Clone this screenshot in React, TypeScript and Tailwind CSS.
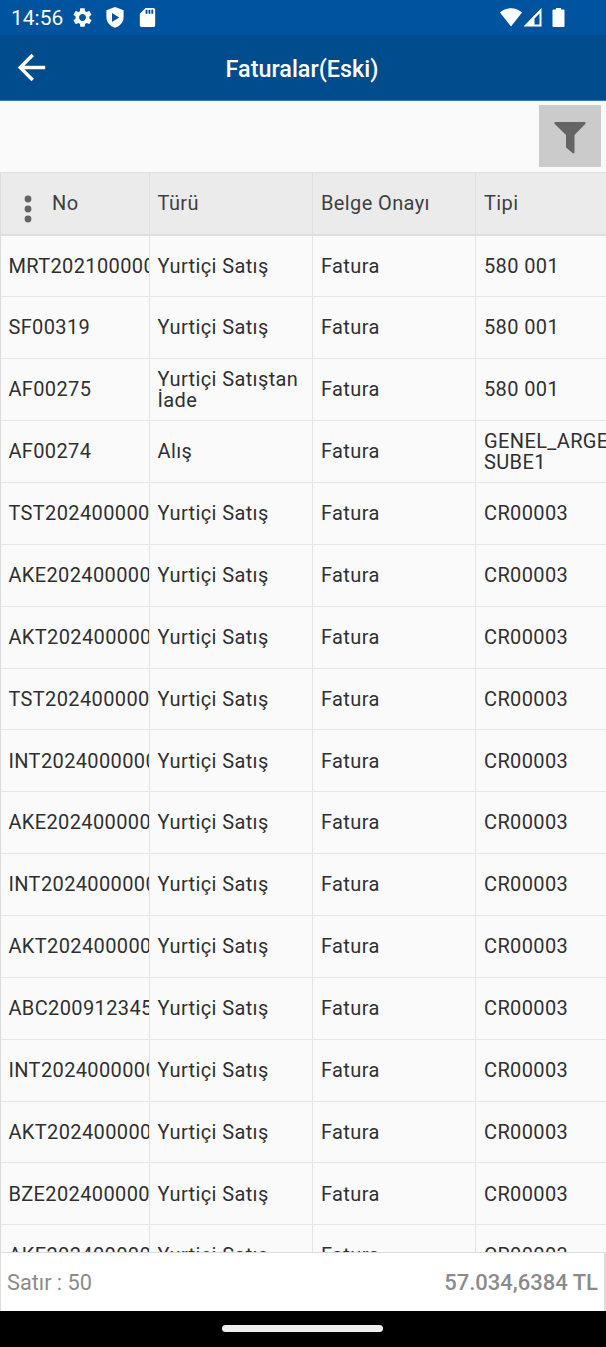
import { clsx } from "clsx";
import { MdArrowBack, MdSdCard, MdSettings } from "react-icons/md";

type Invoice = {
  no: string;
  kind: string;
  approval: string;
  branch: string;
};

const SALE = "Yurtiçi Satış";

const INVOICES: Invoice[] = [
  { no: "MRT2021000001", kind: SALE, approval: "Fatura", branch: "580 001" },
  { no: "SF00319", kind: SALE, approval: "Fatura", branch: "580 001" },
  { no: "AF00275", kind: "Yurtiçi Satıştan İade", approval: "Fatura", branch: "580 001" },
  { no: "AF00274", kind: "Alış", approval: "Fatura", branch: "GENEL_ARGE SUBE1" },
  { no: "TST202400000", kind: SALE, approval: "Fatura", branch: "CR00003" },
  { no: "AKE2024000001", kind: SALE, approval: "Fatura", branch: "CR00003" },
  { no: "AKT2024000001", kind: SALE, approval: "Fatura", branch: "CR00003" },
  { no: "TST202400000", kind: SALE, approval: "Fatura", branch: "CR00003" },
  { no: "INT2024000000", kind: SALE, approval: "Fatura", branch: "CR00003" },
  { no: "AKE2024000001", kind: SALE, approval: "Fatura", branch: "CR00003" },
  { no: "INT2024000000", kind: SALE, approval: "Fatura", branch: "CR00003" },
  { no: "AKT2024000001", kind: SALE, approval: "Fatura", branch: "CR00003" },
  { no: "ABC2009123456", kind: SALE, approval: "Fatura", branch: "CR00003" },
  { no: "INT2024000000", kind: SALE, approval: "Fatura", branch: "CR00003" },
  { no: "AKT2024000001", kind: SALE, approval: "Fatura", branch: "CR00003" },
  { no: "BZE202400000", kind: SALE, approval: "Fatura", branch: "CR00003" },
  { no: "AKE2024000001", kind: SALE, approval: "Fatura", branch: "CR00003" },
];

const COLUMNS = "grid grid-cols-[147.5px_163.5px_163px_1fr]";

function StatusBar() {
  return (
    <div className="flex h-[35px] shrink-0 items-center bg-[#00549f] pl-[11px] pr-[41px] text-white">
      <span className="w-[52px] pt-px text-[21px] leading-none">14:56</span>
      <MdSettings className="ml-[8px] size-[23px]" />
      <svg viewBox="0 0 18 21" className="ml-[12px] h-[21px] w-[18px]" aria-hidden>
        <path
          fill="currentColor"
          fillRule="evenodd"
          d="M9 0 L17.6 3.2 V10 C17.6 15.2 14 19.2 9 20.8 C4 19.2 .4 15.2 .4 10 V3.2 Z M6 6 V15 L13.2 10.5 Z"
        />
      </svg>
      <MdSdCard className="ml-[12px] size-[23px]" />
      <div className="ml-auto flex items-center">
        <svg viewBox="0 0 22 20" className="h-5 w-[22px]" aria-hidden>
          <path fill="currentColor" d="M11 18.5 L0 4.5 C6 -1.3 16 -1.3 22 4.5 Z" />
        </svg>
        <svg viewBox="0 0 19 19" className="ml-[1px] size-[19px]" aria-hidden>
          <path fill="currentColor" fillRule="evenodd" d="M.5 18.5 H18.5 V0 Z M11.5 16.5 V10.5 L16.5 5.5 V16.5 Z" />
        </svg>
        <svg viewBox="0 0 13 20" className="ml-[10px] h-5 w-[13px]" aria-hidden>
          <path
            fill="currentColor"
            d="M4 0 H9 V1.5 H11.5 Q12.5 1.5 12.5 2.5 V18 Q12.5 19 11.5 19 H1.5 Q.5 19 .5 18 V2.5 Q.5 1.5 1.5 1.5 H4 Z"
          />
        </svg>
      </div>
    </div>
  );
}

function TitleBar() {
  return (
    <header className="grid h-[66px] shrink-0 grid-cols-[1fr_auto_1fr] items-center border-b border-[#3c78ab] bg-[#004c8c] px-[11px] text-white">
      <button type="button" aria-label="Geri" className="size-[41px]">
        <MdArrowBack className="size-[41px]" />
      </button>
      <h1 className="pr-[2px] pt-[5px] text-[23.4px] font-medium leading-none">Faturalar(Eski)</h1>
    </header>
  );
}

function Toolbar() {
  return (
    <div className="flex h-[71px] shrink-0 items-start justify-end bg-[#fafafa] pr-[5px] pt-1">
      <button type="button" aria-label="Filtre" className="flex h-[62px] w-[62px] items-center justify-center bg-[#cbcbcb]">
        <svg viewBox="0 0 32 32" className="mt-[3px] size-8" aria-hidden>
          <path
            fill="#646464"
            d="M1 0 H31 Q32.2 .6 31.2 2 L20.5 13 V30.5 Q20 32 18.6 31 L12 25.5 V13 L.8 2 Q-.2 .6 1 0 Z"
          />
        </svg>
      </button>
    </div>
  );
}

function TableHeader() {
  return (
    <div
      className={clsx(
        COLUMNS,
        "h-[63.5px] shrink-0 border-b-2 border-t border-[#dfdfdf] bg-[#ebebeb] text-[20px] leading-none tracking-[0.38px] text-[#3f3f3f]",
      )}
    >
      <div className="flex items-center pl-[23px]">
        <svg viewBox="0 0 8 28" className="mt-[11px] h-7 w-2" fill="#646464" aria-hidden>
          <circle cx="4" cy="4" r="3.4" />
          <circle cx="4" cy="14" r="3.4" />
          <circle cx="4" cy="24" r="3.4" />
        </svg>
        <span className="ml-[20px]">No</span>
      </div>
      <div className="flex items-center border-l border-[#e0e0e0] pl-[8px]">Türü</div>
      <div className="flex items-center border-l border-[#e0e0e0] pl-[8px]">Belge Onayı</div>
      <div className="flex items-center border-l border-[#e0e0e0] pl-[8px]">Tipi</div>
    </div>
  );
}

function InvoiceRow({ invoice }: { invoice: Invoice }) {
  return (
    <div
      className={clsx(
        COLUMNS,
        "h-[61.87px] shrink-0 border-b border-[#e6e6e6] text-[20px] leading-[20.6px] tracking-[0.38px] text-[#303030]",
      )}
    >
      <div className="flex items-center overflow-hidden whitespace-nowrap pl-[7.4px]">{invoice.no}</div>
      <div className="flex items-center border-l border-[#e4e4e4] pl-[8px] pr-[4px]">{invoice.kind}</div>
      <div className="flex items-center border-l border-[#e4e4e4] pl-[8px]">{invoice.approval}</div>
      <div className="flex items-center overflow-hidden border-l border-[#e4e4e4] pl-[8px]">{invoice.branch}</div>
    </div>
  );
}

export default function App() {
  return (
    <div className="flex h-[1347px] w-[606px] flex-col overflow-hidden bg-[#fafafa] font-['Roboto',sans-serif]">
      <StatusBar />
      <TitleBar />
      <Toolbar />
      <main className="flex h-[1080px] shrink-0 flex-col overflow-hidden border-l border-[#dcdcdc]">
        <TableHeader />
        {INVOICES.map((invoice, i) => (
          <InvoiceRow key={i} invoice={invoice} />
        ))}
      </main>
      <footer className="flex h-[59px] shrink-0 items-center justify-between border-l border-r-2 border-t border-[#dcdcdc] bg-white px-[6px] pt-[2px] text-[21.7px] leading-none text-[#8b8b8b]">
        <span>Satır : 50</span>
        <span className="text-[22px] font-medium">57.034,6384 TL</span>
      </footer>
      <nav className="flex flex-1 items-center justify-center bg-black pb-px pr-[2px]">
        <div className="h-[7px] w-[161px] rounded-full bg-[#eeeeee]" />
      </nav>
    </div>
  );
}
